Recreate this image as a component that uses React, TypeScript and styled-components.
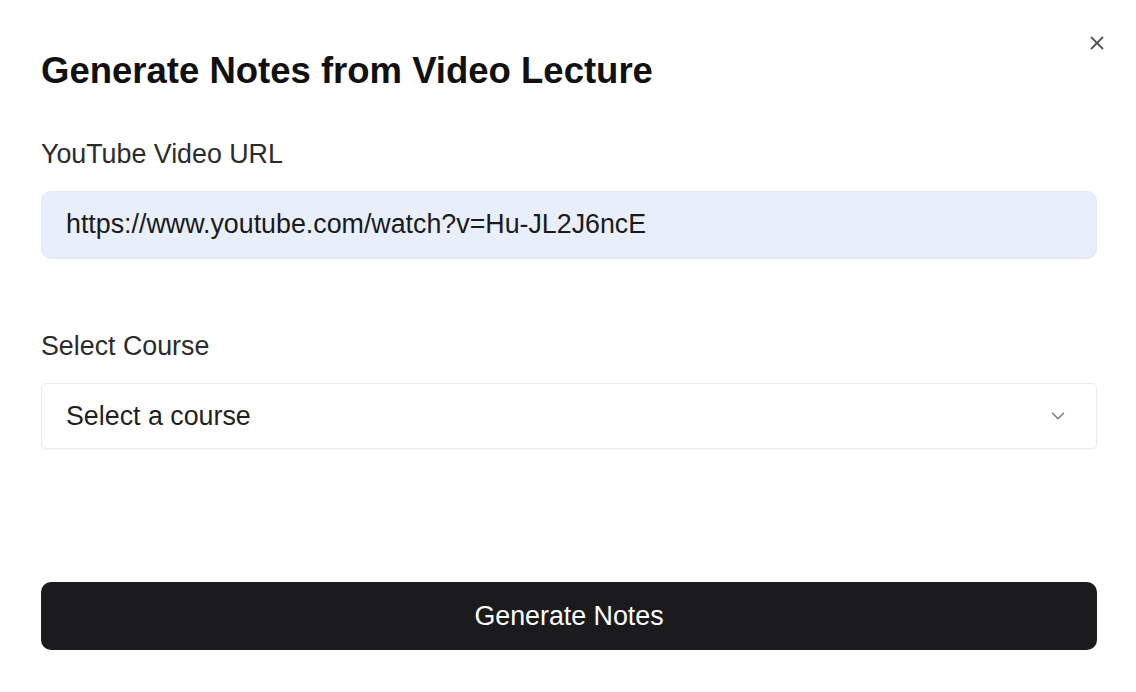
import React, { useState } from "react";
import styled, { createGlobalStyle } from "styled-components";
import { X, ChevronDown } from "lucide-react";

const GlobalStyle = createGlobalStyle`
  html, body {
    margin: 0;
    padding: 0;
    background: #ffffff;
  }
  * {
    box-sizing: border-box;
  }
`;

const App = () => {
    const [url, setUrl] = useState("https://www.youtube.com/watch?v=Hu-JL2J6ncE");

    return (
        <>
            <GlobalStyle />
            <Dialog>
                <CloseButton aria-label="Close">
                    <X size={22} strokeWidth={2} />
                </CloseButton>
                <Title>Generate Notes from Video Lecture</Title>

                <Label htmlFor="video-url" $top={45}>YouTube Video URL</Label>
                <UrlInput
                    id="video-url"
                    value={url}
                    onChange={(evt: React.ChangeEvent<HTMLInputElement>) => setUrl(evt.target.value)}
                />

                <Label $top={71}>Select Course</Label>
                <SelectBox type="button">
                    <span>Select a course</span>
                    <Chevron>
                        <ChevronDown size={22} strokeWidth={1.6} />
                    </Chevron>
                </SelectBox>

                <SubmitButton type="button">Generate Notes</SubmitButton>
            </Dialog>
        </>
    );
};

export default App;

const Dialog = styled.div`
    position: relative;
    display: flex;
    flex-direction: column;
    width: 100%;
    min-height: 692px;
    padding: 49px 39px 0 41px;
    background: #ffffff;
    font-family: "Liberation Sans", Arial, sans-serif;
`;

const CloseButton = styled.button`
    position: absolute;
    top: 32px;
    right: 28px;
    display: flex;
    align-items: center;
    justify-content: center;
    width: 22px;
    height: 22px;
    padding: 0;
    border: none;
    background: transparent;
    color: #555555;
    cursor: pointer;
`;

const Title = styled.h2`
    margin: 0;
    font-size: 36.5px;
    line-height: 1.2;
    font-weight: 700;
    color: #111111;
`;

const Label = styled.label<{ $top: number }>`
    display: block;
    margin-top: ${(p) => p.$top}px;
    margin-bottom: 21px;
    font-size: 26.8px;
    line-height: 1.2;
    color: #2b2b2b;
`;

const UrlInput = styled.input`
    width: 100%;
    height: 68px;
    padding: 0 24px;
    border: 1px solid #e3e8f3;
    border-radius: 10px;
    background: #e8eefa;
    font-family: inherit;
    font-size: 26.8px;
    color: #1a1a1a;
    outline: none;
`;

const SelectBox = styled.button`
    display: flex;
    align-items: center;
    justify-content: space-between;
    width: 100%;
    height: 66px;
    padding: 0 27px 0 24px;
    border: 1px solid #ebebeb;
    border-radius: 6px;
    background: #ffffff;
    box-shadow: 0 1px 2px rgba(0, 0, 0, 0.04);
    font-family: inherit;
    font-size: 26.8px;
    color: #1f1f1f;
    text-align: left;
    cursor: pointer;
`;

const Chevron = styled.span`
    display: flex;
    color: #7a7a7a;
`;

const SubmitButton = styled.button`
    width: 100%;
    height: 68px;
    margin-top: 133px;
    border: none;
    border-radius: 10px;
    background: #1b1b1e;
    color: #ffffff;
    font-family: inherit;
    font-size: 26.8px;
    cursor: pointer;
`;
